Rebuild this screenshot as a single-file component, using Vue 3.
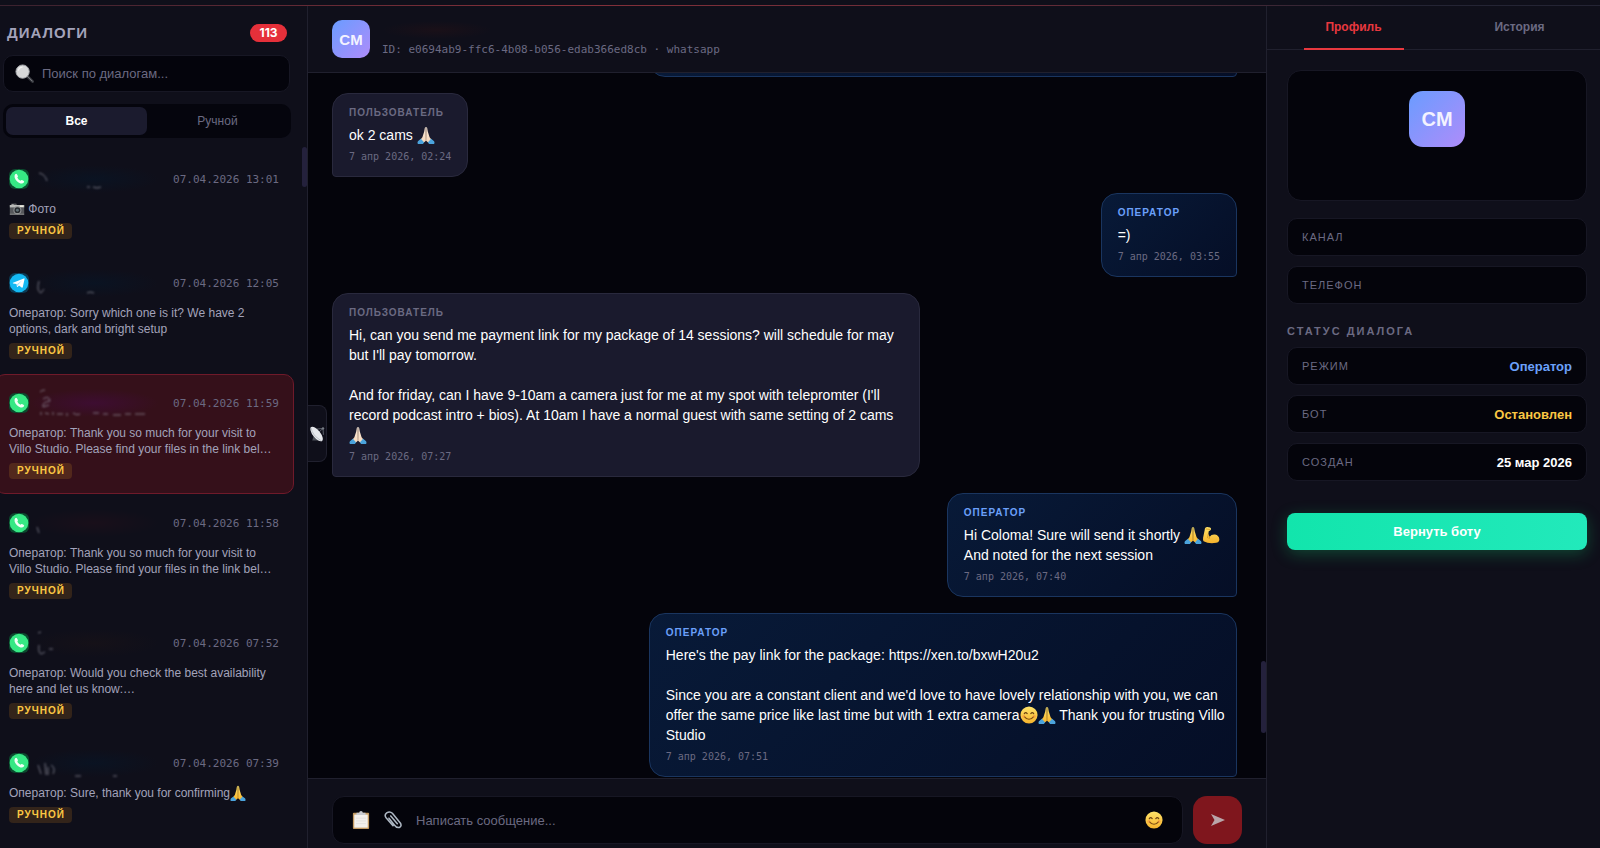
<script setup>
import { ref } from 'vue'

const search = ref('')
const draft = ref('')
const filter = ref('all')
const panelTab = ref('profile')

const dialogs = [
  { id: 1, channel: 'whatsapp', date: '07.04.2026 13:01', icon: 'camera', lines: [['Фото']], smudge: 'blue', marks: 'M10 8q6 1 8 8M58 22l3 0M64 22q4 2 8 0' },
  { id: 2, channel: 'telegram', date: '07.04.2026 12:05', lines: [['Оператор: Sorry which one is it? We have 2'], ['options, dark and bright setup']], smudge: 'blue', marks: 'M10 12q-3 10 2 12l3-4M58 24q3-2 7 0' },
  { id: 3, channel: 'whatsapp', date: '07.04.2026 11:59', active: true, lines: [['Оператор: Thank you so much for your visit to'], ['Villo Studio. Please find your files in the link bel…']], smudge: 'violet', marks: 'M11 3q2-2 5-2M14 10q6-4 7 2q-8 1-7 6l6-2M12 23v3M16 24l4 1M24 23v3M28 25h6M38 24v3M44 24q4 3 7 1M64 24h6M74 25h5M84 26h8M96 25h6M106 25h10' },
  { id: 4, channel: 'whatsapp', date: '07.04.2026 11:58', lines: [['Оператор: Thank you so much for your visit to'], ['Villo Studio. Please find your files in the link bel…']], smudge: 'red', marks: 'M8 18l2 6' },
  { id: 5, channel: 'whatsapp', date: '07.04.2026 07:52', lines: [['Оператор: Would you check the best availability'], ['here and let us know:…']], smudge: 'brown', marks: 'M9 4l3-1M10 16q-1 8 2 9l4-2M20 20l4 0' },
  { id: 6, channel: 'whatsapp', date: '07.04.2026 07:39', lines: [['Оператор: Sure, thank you for confirming', { e: 'pray' }]], smudge: 'blue', marks: 'M9 16l3 9M16 14l1 12M19 18v8M22 16q5 3 2 9M46 27h6M84 27h4' },
]

const messages = [
  { id: 1, from: 'user', lines: [['ok 2 cams ', { e: 'pray-light' }]], time: '7 апр 2026, 02:24' },
  { id: 2, from: 'operator', lines: [['=)']], time: '7 апр 2026, 03:55' },
  {
    id: 3,
    from: 'user',
    wide: true,
    lines: [
      ['Hi, can you send me payment link for my package of 14 sessions? will schedule for may'],
      ["but I'll pay tomorrow."],
      [],
      ["And for friday, can I have 9-10am a camera just for me at my spot with telepromter (I'll"],
      ['record podcast intro + bios). At 10am I have a normal guest with same setting of 2 cams'],
      [{ e: 'pray-light' }],
    ],
    time: '7 апр 2026, 07:27',
  },
  {
    id: 4,
    from: 'operator',
    lines: [['Hi Coloma! Sure will send it shortly ', { e: 'pray' }, { e: 'muscle' }], ['And noted for the next session']],
    time: '7 апр 2026, 07:40',
  },
  {
    id: 5,
    from: 'operator',
    wide: true,
    lines: [
      ["Here's the pay link for the package: https://xen.to/bxwH20u2"],
      [],
      ["Since you are a constant client and we'd love to have lovely relationship with you, we can"],
      ['offer the same price like last time but with 1 extra camera', { e: 'smile' }, { e: 'pray' }, ' Thank you for trusting Villo'],
      ['Studio'],
    ],
    time: '7 апр 2026, 07:51',
  },
]

const contacts = [
  { label: 'Канал', value: '' },
  { label: 'Телефон', value: '' },
]
const status = [
  { label: 'Режим', value: 'Оператор', tone: 'blue' },
  { label: 'Бот', value: 'Остановлен', tone: 'amber' },
  { label: 'Создан', value: '25 мар 2026', tone: 'white' },
]
</script>

<template>
  <div class="page">
    <svg class="sprites" aria-hidden="true">
      <defs>
        <linearGradient id="g-yellow" x1="0" y1="0" x2="0" y2="1"><stop offset="0" stop-color="#ffe36a" /><stop offset="1" stop-color="#f6b32c" /></linearGradient>
        <linearGradient id="g-light" x1="0" y1="0" x2="0" y2="1"><stop offset="0" stop-color="#fdebd8" /><stop offset="1" stop-color="#f3d6ba" /></linearGradient>
      </defs>
      <symbol id="e-pray" viewBox="0 0 20 20">
        <path d="M9.700 1C8.500 1 8.600 3 8 6L6 12.500 3.500 15.500 7 19 9.900 16.500z" fill="url(#g-yellow)" />
        <path d="M10.300 1C11.500 1 11.400 3 12 6L14 12.500 16.500 15.500 13 19 10.100 16.500z" fill="url(#g-yellow)" />
        <path d="M10 4v12" stroke="#c98a16" stroke-width=".5" />
        <path d="M4.300 14.300L8 18.300 6.500 20H1q-1-1 0-3zM15.700 14.300L12 18.300 13.500 20H19q1-1 0-3z" fill="#4ba3dc" />
      </symbol>
      <symbol id="e-pray-light" viewBox="0 0 20 20">
        <path d="M9.700 1C8.500 1 8.600 3 8 6L6 12.500 3.500 15.500 7 19 9.900 16.500z" fill="url(#g-light)" />
        <path d="M10.300 1C11.500 1 11.400 3 12 6L14 12.500 16.500 15.500 13 19 10.100 16.500z" fill="url(#g-light)" />
        <path d="M10 4v12" stroke="#b99475" stroke-width=".5" />
        <path d="M4.300 14.300L8 18.300 6.500 20H1q-1-1 0-3zM15.700 14.300L12 18.300 13.500 20H19q1-1 0-3z" fill="#4ba3dc" />
      </symbol>
      <symbol id="e-muscle" viewBox="0 0 20 20">
        <path d="M3 4.500Q3 1 6 1l3 .6q1.700.9.800 2.700-.6 1.300-2.200 1.200L7 9l1.500 3q2-3 6-2.500 4.500.9 4.800 5.500 0 4-6 4-7 .5-11.500-2Q.8 16 1.200 13z" fill="url(#g-yellow)" />
        <path d="M7 9l-.8 4M8.500 12l-.6 2M4.500 3.300l4 .5" stroke="#c98a16" stroke-width=".8" fill="none" stroke-linecap="round" />
      </symbol>
      <symbol id="e-smile" viewBox="0 0 20 20">
        <circle cx="10" cy="10" r="9.500" fill="url(#g-yellow)" />
        <path d="M4.800 8.500q1.500-2.300 3.200 0M12 8.500q1.700-2.300 3.200 0" stroke="#6d4413" stroke-width="1.300" fill="none" stroke-linecap="round" />
        <path d="M5 12q5 5.500 10 0" stroke="#7b4a12" stroke-width="1.300" fill="none" stroke-linecap="round" />
        <circle cx="4.300" cy="11.500" r="1.700" fill="#f58b3c" opacity=".5" /><circle cx="15.700" cy="11.500" r="1.700" fill="#f58b3c" opacity=".5" />
      </symbol>
      <symbol id="e-camera" viewBox="0 0 20 20">
        <path d="M1 5h4l1-2h3l1 2h9v12H1z" fill="#55575b" />
        <path d="M1 5h18v3H1z" fill="#b9bab8" /><path d="M3 3.500h3V5H3z" fill="#9a9b9b" />
        <rect x="13.500" y="5.500" width="4.500" height="2" fill="#eceade" />
        <circle cx="10.500" cy="11.500" r="5" fill="#8c8e90" /><circle cx="10.500" cy="11.500" r="3.600" fill="#25282c" /><circle cx="10.500" cy="11.500" r="1.800" fill="#5d6c72" />
        <path d="M1 16h18v1H1z" fill="#a1a19e" />
      </symbol>
      <symbol id="e-search" viewBox="0 0 20 20">
        <path d="M12.500 12.500l6 6" stroke="#34363c" stroke-width="3" stroke-linecap="round" />
        <path d="M12.500 12.300l6 6" stroke="#85868c" stroke-width="1" />
        <circle cx="8" cy="8" r="7" fill="#d7d8d9" stroke="#a7a9ad" stroke-width="1" />
        <path d="M3.500 7q.8-3.500 4.500-3.700" stroke="#f3f3f3" stroke-width="1.200" fill="none" />
      </symbol>
      <symbol id="e-clipboard" viewBox="0 0 20 20">
        <rect x="1" y="2" width="18" height="18" rx="1" fill="#c39a62" />
        <rect x="2.500" y="4" width="15" height="14.500" fill="#f3f0ec" />
        <path d="M5 2h3q0-2 2-2t2 2h3v2.500H5z" fill="#c9cbd0" />
        <path d="M4.500 8h11M4.500 11h11M4.500 14h11" stroke="#dedbd8" stroke-width=".7" />
      </symbol>
      <symbol id="e-clip" viewBox="0 0 20 20">
        <path d="M5.500 8L11.500 15.500Q14 19 17 18.300 20 17 18.300 13.500L9.300 2.500Q6.500-.2 3 2 0 4.200 2.300 7.500L10 16.300M7.500 5.500l7.300 8.600" fill="none" stroke="#aeb8c4" stroke-width="1.700" stroke-linecap="round" stroke-linejoin="round" />
      </symbol>
      <symbol id="e-dish" viewBox="0 0 20 20">
        <path d="M6 12l-2 6h10l-3-4z" fill="#4b4f57" />
        <path d="M12 8l5.500-5M9 4l8.500-1 .5 8" stroke="#6f747d" stroke-width="1" fill="none" />
        <ellipse cx="9.500" cy="10" rx="11" ry="4.800" transform="rotate(52 9.500 10)" fill="#e6e8ec" />
        <path d="M2.500 2Q4 12 15.500 18.500" stroke="#b3b7be" stroke-width="1" fill="none" />
        <circle cx="17.500" cy="3" r="1.500" fill="#777c84" />
      </symbol>
      <symbol id="c-whatsapp" viewBox="0 0 20 20">
        <rect width="20" height="20" rx="6" fill="#0b4a2e" /><circle cx="10" cy="10" r="9.300" fill="#36e884" />
        <path d="M6.200 5.300q1-1 1.700 0l1 1.700q.3.700-.6 1.500.9 2.200 3.200 3.200.8-1 1.500-.7l1.800 1q.8.600 0 1.600-1.200 1.500-3.300.8Q7.300 13 5.700 8.700q-.6-2 .5-3.400z" fill="#f2fff7" />
      </symbol>
      <symbol id="c-telegram" viewBox="0 0 20 20">
        <rect width="20" height="20" rx="6" fill="#0b3b55" /><circle cx="10" cy="10" r="9.300" fill="#14b9f3" />
        <path d="M4 9.800L14.800 5.400q.9-.2.700.8L13.800 14q-.3 1-1.200.4L10 12.500l-1.400 1.400q-.6.400-.7-.4l-.4-2.400-3.400-.7q-.8-.3-.1-.6z" fill="#fff" />
        <path d="M8 11.200l5-3.800-3.800 4.400-.5 1.900z" fill="#9fdcf5" />
      </symbol>
    </svg>

    <div class="topline"></div>

    <div class="layout">
      <aside class="sidebar">
        <header class="side-head">
          <h1>ДИАЛОГИ</h1>
          <span class="count">113</span>
        </header>
        <label class="search">
          <svg class="search-icon" aria-hidden="true"><use href="#e-search" /></svg>
          <input v-model="search" type="text" aria-label="Поиск по диалогам" placeholder="Поиск по диалогам..." />
        </label>
        <div class="filters">
          <button type="button" :class="{ on: filter === 'all' }" @click="filter = 'all'">Все</button>
          <button type="button" :class="{ on: filter === 'manual' }" @click="filter = 'manual'">Ручной</button>
        </div>
        <div class="list">
          <article v-for="d in dialogs" :key="d.id" class="dialog" :class="{ active: d.active }">
            <div class="dialog-top">
              <svg class="channel" aria-hidden="true"><use :href="'#c-' + d.channel" /></svg>
              <span class="smudge" :class="d.smudge">
                <svg viewBox="0 0 130 28" aria-hidden="true"><path :d="d.marks" /></svg>
              </span>
              <time>{{ d.date }}</time>
            </div>
            <div class="preview">
              <div v-for="(line, i) in d.lines" :key="i">
                <svg v-if="d.icon" class="emoji small" aria-hidden="true"><use :href="'#e-' + d.icon" /></svg><template v-for="(s, j) in line" :key="j"><svg v-if="s.e" class="emoji small" aria-hidden="true"><use :href="'#e-' + s.e" /></svg><template v-else>{{ (d.icon ? ' ' : '') + s }}</template></template>
              </div>
            </div>
            <span class="tag">РУЧНОЙ</span>
          </article>
        </div>
        <div class="thumb side-thumb"></div>
      </aside>

      <main class="chat">
        <header class="chat-head">
          <div class="avatar">CM</div>
          <div class="who">
            <span class="who-name"></span>
            <span class="who-id">ID: e0694ab9-ffc6-4b08-b056-edab366ed8cb · whatsapp</span>
          </div>
        </header>
        <section class="messages">
          <div class="bubble operator wide previous"></div>
          <article v-for="m in messages" :key="m.id" class="bubble" :class="[m.from, { wide: m.wide }]">
            <div class="author">{{ m.from === 'user' ? 'ПОЛЬЗОВАТЕЛЬ' : 'ОПЕРАТОР' }}</div>
            <div class="body">
              <div v-for="(line, i) in m.lines" :key="i" class="line"><template v-for="(s, j) in line" :key="j"><svg v-if="s.e" class="emoji" aria-hidden="true"><use :href="'#e-' + s.e" /></svg><template v-else>{{ s }}</template></template></div>
            </div>
            <time>{{ m.time }}</time>
          </article>
          <div class="thumb chat-thumb"></div>
        </section>
        <button class="dish" type="button" aria-label="Каналы">
          <svg aria-hidden="true"><use href="#e-dish" /></svg>
        </button>
        <footer class="composer">
          <div class="field">
            <button type="button" aria-label="Шаблоны"><svg aria-hidden="true"><use href="#e-clipboard" /></svg></button>
            <button type="button" aria-label="Прикрепить файл"><svg aria-hidden="true"><use href="#e-clip" /></svg></button>
            <input v-model="draft" type="text" aria-label="Сообщение" placeholder="Написать сообщение..." />
            <button type="button" aria-label="Эмодзи"><svg aria-hidden="true"><use href="#e-smile" /></svg></button>
          </div>
          <button class="send" type="button" aria-label="Отправить">
            <svg viewBox="0 0 14 12" aria-hidden="true"><path d="M0 0L14 6 0 12 3.500 6z" fill="#b9a5a9" /></svg>
          </button>
        </footer>
      </main>

      <aside class="panel">
        <nav class="tabs">
          <button type="button" :class="{ on: panelTab === 'profile' }" @click="panelTab = 'profile'">Профиль</button>
          <button type="button" :class="{ on: panelTab === 'history' }" @click="panelTab = 'history'">История</button>
        </nav>
        <div class="panel-body">
          <div class="profile"><div class="avatar big">CM</div></div>
          <dl class="rows">
            <div v-for="r in contacts" :key="r.label"><dt>{{ r.label }}</dt><dd>{{ r.value }}</dd></div>
          </dl>
          <h2>СТАТУС ДИАЛОГА</h2>
          <dl class="rows">
            <div v-for="r in status" :key="r.label"><dt>{{ r.label }}</dt><dd :class="r.tone">{{ r.value }}</dd></div>
          </dl>
          <button class="return" type="button">Вернуть боту</button>
        </div>
      </aside>
    </div>
  </div>
</template>

<style>
html,
body {
  background: #04040b;
}
</style>

<style scoped>
.page,
.page * {
  box-sizing: border-box;
}
.page {
  display: flex;
  flex-direction: column;
  height: 100vh;
  overflow: hidden;
  background: #0f0f1a;
  color: #fff;
  font-family: 'Liberation Sans', Arial, sans-serif;
  font-size: 14px;
}
button,
input {
  margin: 0;
  padding: 0;
  border: 0;
  background: none;
  font: inherit;
  color: inherit;
}
button {
  cursor: pointer;
}
input {
  min-width: 0;
  outline: none;
}
input::placeholder {
  color: #6b6a82;
  opacity: 1;
}
.sprites {
  position: absolute;
  width: 0;
  height: 0;
}
.topline {
  flex: none;
  height: 6px;
  background: linear-gradient(90deg, #3a222f, #85303a 35%, #642b37 65%, #242434 88%) bottom / 100% 1px no-repeat;
}
.layout {
  flex: 1;
  display: grid;
  grid-template-columns: 308px minmax(0, 1fr) 334px;
  min-height: 0;
}

/* dialogs */
.sidebar {
  position: relative;
  display: flex;
  flex-direction: column;
  min-height: 0;
  overflow: hidden;
  border-right: 1px solid #20202e;
}
.side-head {
  display: flex;
  align-items: center;
  justify-content: space-between;
  flex: none;
  height: 49px;
  padding: 5px 20px 0 7px;
}
h1 {
  margin: 0;
  font-size: 15px;
  line-height: 20px;
  letter-spacing: 1px;
  color: #a3a3ba;
}
.count {
  min-width: 37px;
  border-radius: 9px;
  background: #e5303a;
  font: 700 12px/18px Inter, sans-serif;
  text-align: center;
}
.search {
  display: flex;
  align-items: center;
  gap: 8px;
  flex: none;
  height: 37px;
  margin: 0 17px 0 3px;
  padding: 0 11px;
  border: 1px solid #171724;
  border-radius: 10px;
  background: #04040c;
}
.search-icon {
  width: 19px;
  height: 19px;
}
.search input {
  flex: 1;
  font-size: 13px;
}
.filters {
  display: grid;
  grid-template-columns: 1fr 1fr;
  flex: none;
  height: 34px;
  margin: 12px 16px 0 3px;
  padding: 3px;
  border-radius: 10px;
  background: #05050d;
}
.filters button {
  border-radius: 7px;
  font-size: 12px;
  font-weight: 500;
  color: #6b6a82;
}
.filters .on {
  background: #1b1b2e;
  font-weight: 700;
  color: #fff;
}
.list {
  flex: 1;
  min-height: 0;
  margin: 12px 13px 0 -5px;
  overflow: hidden;
}
.dialog {
  padding: 14px 14px 14px 13px;
  border: 1px solid transparent;
  border-radius: 10px;
}
.dialog.active {
  border-color: #6f1a2a;
  background: #35101a;
}
.dialog-top {
  display: flex;
  align-items: center;
  height: 28px;
}
.channel {
  flex: none;
  width: 20px;
  height: 20px;
}
.smudge {
  width: 130px;
  height: 28px;
  border-radius: 10px;
}
.smudge svg {
  display: block;
  width: 130px;
  height: 28px;
  fill: none;
  stroke: #a2a2b0;
  stroke-width: 1;
  opacity: 0.7;
  filter: blur(1px);
}
.blue {
  background: radial-gradient(closest-side, #0a1322, transparent);
}
.violet {
  background: radial-gradient(closest-side, #3d0d31, transparent);
}
.red {
  background: radial-gradient(closest-side, #190f1a, transparent);
}
.brown {
  background: radial-gradient(closest-side, #151118, transparent);
}
time {
  font-family: 'DejaVu Sans Mono', monospace;
  color: #6b6a82;
}
.dialog time {
  margin-left: auto;
  font-size: 11px;
  white-space: nowrap;
}
.preview {
  margin: 8px 0 6px;
  font-size: 12px;
  line-height: 16px;
  color: #a3a3ba;
  white-space: nowrap;
}
.emoji {
  display: inline-block;
  width: 18px;
  height: 18px;
  vertical-align: -4px;
}
.emoji.small {
  width: 16px;
  height: 16px;
}
.tag {
  display: block;
  width: max-content;
  padding: 0 7px 0 8px;
  border-radius: 4px;
  background: #33241a;
  font-size: 10px;
  font-weight: 700;
  line-height: 16px;
  letter-spacing: 1px;
  color: #fbc743;
}
.active .tag {
  background: #52281c;
}
.thumb {
  position: absolute;
  right: 0;
  width: 5px;
  border-radius: 3px;
  background: #24213c;
}
.side-thumb {
  top: 141px;
  height: 40px;
}

/* chat */
.chat {
  position: relative;
  display: flex;
  flex-direction: column;
  min-height: 0;
  background: #04040b;
}
.chat-head {
  display: flex;
  align-items: center;
  gap: 12px;
  flex: none;
  height: 67px;
  padding: 0 24px;
  border-bottom: 1px solid #20202e;
  background: #0f0f1a;
}
.avatar {
  display: grid;
  place-items: center;
  width: 38px;
  height: 38px;
  border-radius: 10px;
  background: linear-gradient(135deg, #6a9cff, #ae8cfa);
  font-size: 15px;
  font-weight: 700;
  color: #f3f2ff;
}
.avatar.big {
  width: 56px;
  height: 56px;
  border-radius: 14px;
  font-size: 20px;
}
.who {
  display: flex;
  flex-direction: column;
  gap: 4px;
}
.who-name {
  width: 110px;
  height: 18px;
  background: radial-gradient(closest-side, #1a1018, transparent);
}
.who-id {
  font: 11px/14px 'DejaVu Sans Mono', monospace;
  color: #6b6a82;
}
.messages {
  position: relative;
  flex: 1;
  display: flex;
  flex-direction: column;
  gap: 16px;
  min-height: 0;
  padding: 0 29px 0 24px;
  overflow: hidden;
}
.bubble {
  flex: none;
  padding: 12px 16px;
  border: 1px solid #29293d;
  border-radius: 16px;
}
.bubble.wide {
  width: 65%;
}
.user {
  align-self: flex-start;
  border-bottom-left-radius: 4px;
  background: #1a1a2d;
}
.operator {
  align-self: flex-end;
  border-color: #1a355f;
  border-bottom-right-radius: 4px;
  background: linear-gradient(135deg, #081a38, #050e26);
}
.previous {
  height: 40px;
  margin-top: -36px;
}
.author {
  margin-bottom: 5px;
  font-size: 10px;
  font-weight: 700;
  line-height: 14px;
  letter-spacing: 1px;
  color: #6b6a82;
}
.operator .author {
  color: #6ba0fa;
}
.line {
  height: 20px;
  line-height: 20px;
  white-space: pre;
}
.bubble time {
  display: block;
  margin-top: 5px;
  font-size: 10px;
  line-height: 14px;
}
.chat-thumb {
  top: 588px;
  height: 72px;
}
.dish {
  position: absolute;
  top: 399px;
  left: 0;
  display: grid;
  place-items: center;
  width: 19px;
  height: 57px;
  border: 1px solid #20202e;
  border-left: 0;
  border-radius: 0 8px 8px 0;
  background: #0f0f1a;
}
.dish svg {
  width: 16px;
  height: 16px;
}
.composer {
  display: flex;
  gap: 10px;
  flex: none;
  height: 70px;
  padding: 17px 24px 4px 24px;
  border-top: 1px solid #20202e;
  background: #0f0f1a;
}
.field {
  flex: 1;
  display: flex;
  align-items: center;
  gap: 14px;
  padding: 0 19px;
  border: 1px solid #171724;
  border-radius: 12px;
  background: #04040b;
}
.field button {
  width: 18px;
  height: 18px;
}
.field svg {
  display: block;
  width: 18px;
  height: 18px;
}
.field input {
  flex: 1;
  font-size: 13px;
}
.send {
  display: grid;
  place-items: center;
  width: 49px;
  border-radius: 14px;
  background: #7f161d;
}
.send svg {
  width: 14px;
  height: 12px;
}

/* profile */
.panel {
  border-left: 1px solid #20202e;
}
.tabs {
  display: flex;
  justify-content: center;
  gap: 66px;
  height: 44px;
  padding-left: 6px;
  border-bottom: 1px solid #20202e;
}
.tabs button {
  width: 100px;
  height: 44px;
  border-bottom: 2px solid transparent;
  font-size: 12px;
  font-weight: 700;
  color: #6b6a82;
}
.tabs .on {
  border-color: #e8383f;
  color: #e8383f;
}
.panel-body {
  padding: 20px 13px 20px 20px;
}
.profile {
  display: flex;
  justify-content: center;
  height: 131px;
  padding-top: 20px;
  border: 1px solid #171724;
  border-radius: 14px;
  background: #04040b;
}
.rows {
  display: grid;
  gap: 10px;
  margin: 17px 0 0;
}
.rows div {
  display: flex;
  align-items: center;
  justify-content: space-between;
  height: 38px;
  padding: 0 14px;
  border: 1px solid #171724;
  border-radius: 10px;
  background: #04040b;
}
dt {
  font-size: 11px;
  letter-spacing: 1px;
  text-transform: uppercase;
  color: #6b6a82;
}
dd {
  margin: 0;
  font-size: 13px;
  font-weight: 700;
}
dd.blue {
  background: none;
  color: #6ba0fa;
}
dd.amber {
  color: #fbc743;
}
h2 {
  margin: 20px 0 0;
  font-size: 11px;
  line-height: 14px;
  letter-spacing: 2px;
  color: #6b6a82;
}
h2 + .rows {
  margin-top: 9px;
}
.return {
  display: block;
  width: 100%;
  height: 37px;
  margin-top: 32px;
  border-radius: 8px;
  background: linear-gradient(90deg, #12e5ac, #22e9bb);
  box-shadow: 0 4px 16px rgba(20, 200, 110, 0.3);
  font-size: 13px;
  font-weight: 700;
}
</style>
